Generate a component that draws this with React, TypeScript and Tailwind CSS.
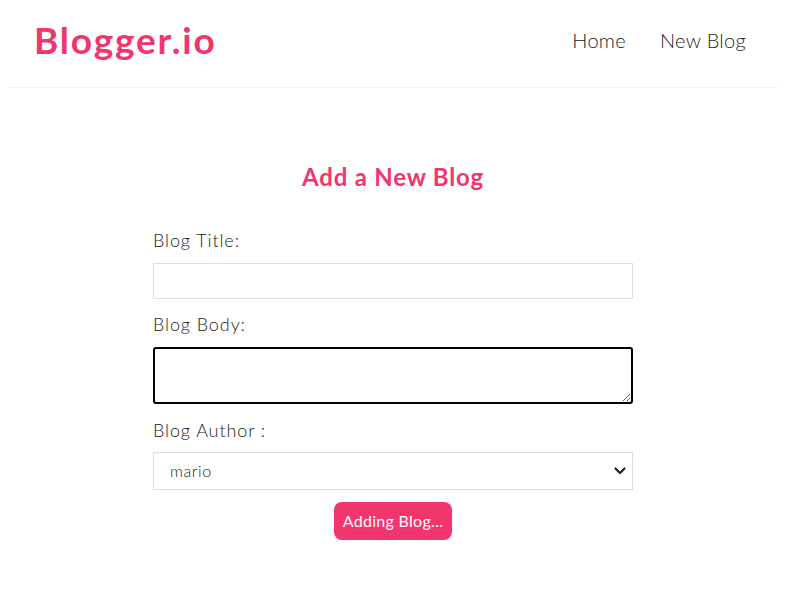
import React from "react";

export default function App() {
  return (
    <div className="min-h-[607px] bg-white text-[#222] font-['Lato','Open_Sans',sans-serif]">
      {/* Navbar */}
      <nav className="mx-[9px] h-[88px] flex items-center justify-between border-b border-[#f2f2f2] pl-[25px] pr-[31px]">
        <h1 className="text-[37px] font-bold tracking-[1.8px] text-[#f1356d] leading-none -mt-[8px]">Blogger.io</h1>
        <div className="flex items-center gap-[34px] text-[20px] font-light tracking-[0.3px] leading-none -mt-[8px]">
          <a href="#" className="text-[#222]">Home</a>
          <a href="#" className="text-[#222]">New Blog</a>
        </div>
      </nav>

      {/* Create form */}
      <div className="w-[480px] mx-auto pt-[77px] flex flex-col items-center">
        <h2 className="text-[24px] font-bold tracking-[0.8px] text-[#f1356d] leading-none">Add a New Blog</h2>
        <form className="w-full mt-[42px] flex flex-col">
          <label className="text-[18px] font-light tracking-[0.9px] leading-none">Blog Title:</label>
          <input
            type="text"
            className="mt-[14px] h-[36px] w-full border border-[#ddd] px-[6px] outline-none"
          />
          <label className="mt-[16px] text-[18px] font-light tracking-[0.9px] leading-none">Blog Body:</label>
          <textarea className="mt-[14px] h-[57px] w-full border-2 border-black rounded-[3px] px-[6px] outline-none resize-y" />
          <label className="mt-[17px] text-[18px] font-light tracking-[0.9px] leading-none">Blog Author :</label>
          <div className="relative mt-[13px]">
            <select className="h-[38px] w-full border border-[#ddd] pl-[16px] text-[16px] font-light tracking-[0.6px] text-[#222] appearance-none bg-white outline-none">
              <option>mario</option>
              <option>yoshi</option>
            </select>
            <svg
              className="absolute right-[6px] top-[13px] w-[14px] h-[12px] pointer-events-none"
              viewBox="0 0 14 12"
              fill="none"
              stroke="#222"
              strokeWidth="2.2"
              strokeLinecap="round"
              strokeLinejoin="round"
            >
              <path d="M2.5 3.5 L7 8 L11.5 3.5" />
            </svg>
          </div>
          <button
            type="button"
            className="self-center mt-[12px] h-[38px] w-[118px] rounded-[8px] bg-[#f1356d] text-white text-[16px] tracking-[0.3px]"
          >
            Adding Blog...
          </button>
        </form>
      </div>
    </div>
  );
}
